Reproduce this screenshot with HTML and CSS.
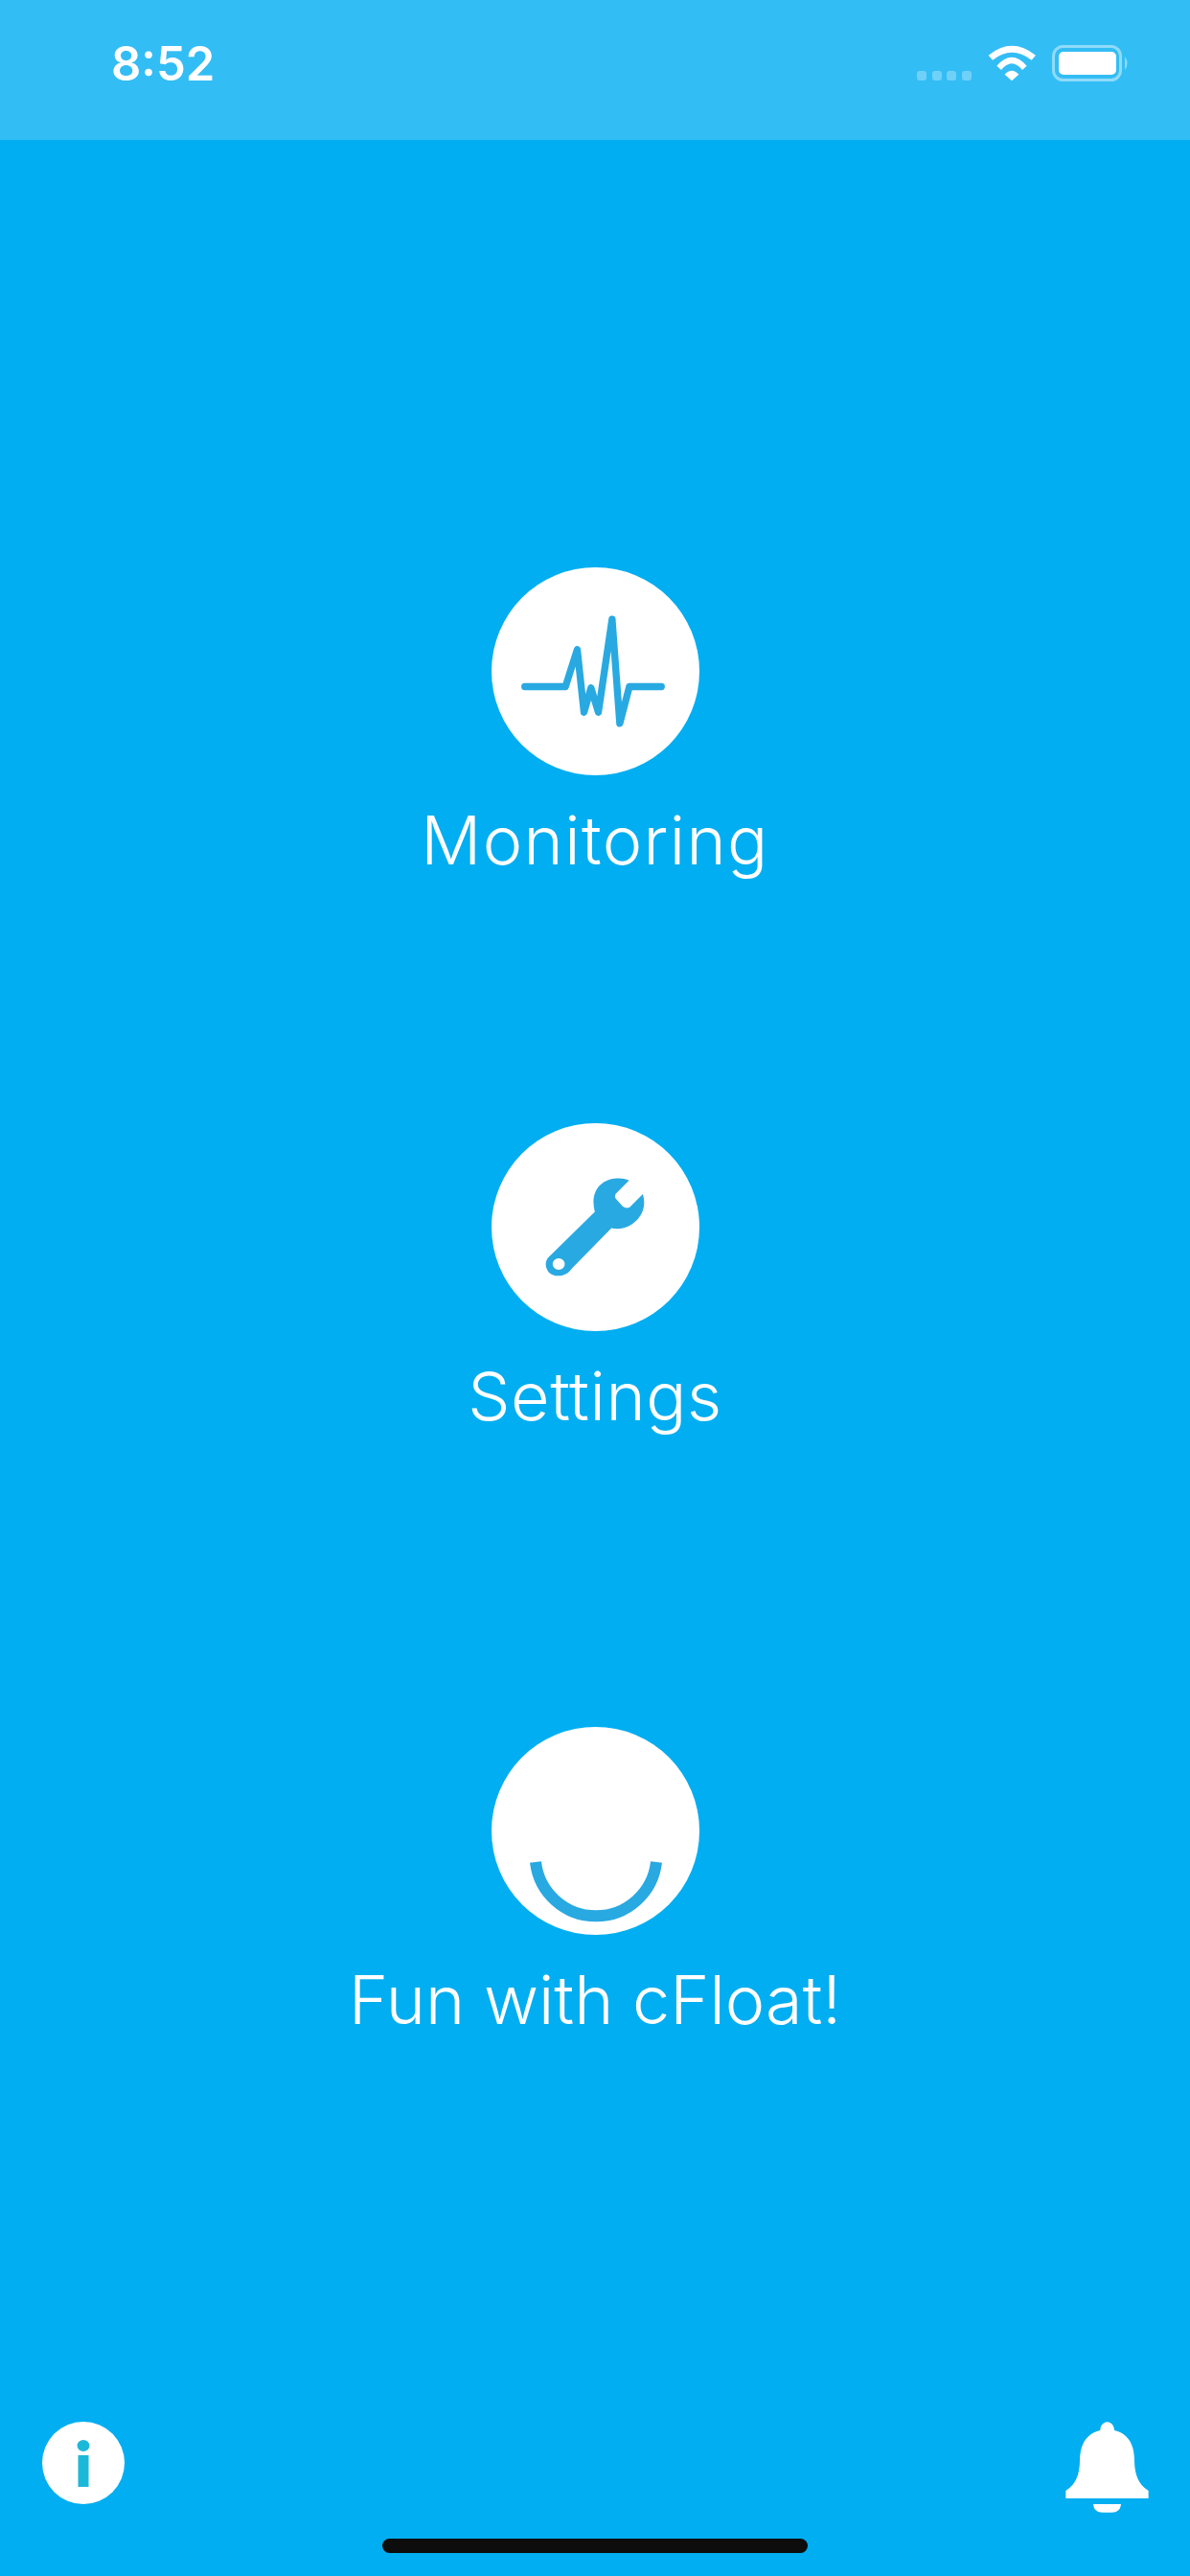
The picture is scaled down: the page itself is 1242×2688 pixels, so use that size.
FILE: index.html
```html
<!DOCTYPE html>
<html lang="en">
<head>
<meta charset="utf-8">
<title>cFloat</title>
<link rel="stylesheet" href="styles.css">
</head>
<body>
<div class="screen">
  <header class="status-bar">
    <span class="time">8:52</span>
    <div class="status-icons">
      <div class="signal"><i></i><i></i><i></i><i></i></div>
      <svg class="wifi" viewBox="300 80 160 115"><path fill="#fff" d="M305 112Q378 52 453 112L440 127Q378 79 318 127ZM331 145Q378 91 425 145L411 158Q378 118 345 158ZM356 172Q378 148 400 172L378 192Z"/></svg>
      <svg class="battery" viewBox="0 0 82 38"><rect x="1.5" y="1.5" width="70" height="35" rx="10" fill="none" stroke="#fff" stroke-opacity=".45" stroke-width="3"/><rect x="7" y="7" width="60" height="24" rx="5" fill="#fff"/><path d="M76 12Q81 19 76 26Z" fill="#fff" fill-opacity=".45"/></svg>
    </div>
  </header>

  <main class="menu">
    <a class="item">
      <div class="disc">
        <svg viewBox="340 65 650 650"><polyline points="444,438 571,438 608,322 629,518 651,442 674,518 717,227 741,553 771,438 871,438" fill="none" stroke="#29a9e1" stroke-width="22" stroke-linecap="round" stroke-linejoin="round"/></svg>
      </div>
      <span class="label label-monitoring">Monitoring</span>
    </a>
    <a class="item item-settings">
      <div class="disc">
        <svg viewBox="220 65 650 650"><path fill-rule="evenodd" fill="#29a9e1" d="M543 342C533 305 540 270 570 250C592 236 625 233 650 244L609 285Q603 293 609 302L630 325Q640 333 652 328L693 287C705 325 690 360 660 380C640 394 615 398 595 393L470 520C455 543 420 550 400 532C385 515 388 495 398 484ZM430 487A19 18 0 1 0 430.100 523A19 18 0 1 0 430 487Z"/></svg>
      </div>
      <span class="label label-settings">Settings</span>
    </a>
    <a class="item item-fun">
      <div class="disc">
        <svg viewBox="513 1802 217 217"><path d="M559 1943A63.400 63.400 0 0 0 685 1943" fill="none" stroke="#29a9e1" stroke-width="12"/></svg>
      </div>
      <span class="label">Fun with cFloat!</span>
    </a>
  </main>

  <footer class="toolbar">
    <svg class="info" viewBox="0 0 86 86"><circle cx="43" cy="43" r="43" fill="#fff"/><ellipse cx="43" cy="25" rx="6.500" ry="6" fill="#1cb8da"/><rect x="37.500" y="35" width="11" height="33" fill="#1cb8da"/></svg>
    <svg class="bell" viewBox="156 112 261 286"><path fill="#fff" d="M265 139C265 124 275 113 287 113C299 113 309 124 309 139C350 148 372 180 372 235C373 275 383 308 416 328V352H157V328C190 308 200 275 201 235C201 180 224 148 265 139Z"/><path fill="#fff" d="M243 370H330C328 388 318 396 300 396H273C255 396 245 388 243 370Z"/></svg>
  </footer>

  <div class="home-area"><div class="home-indicator"></div></div>
</div>
</body>
</html>
```
FILE: styles.css
```css
* { box-sizing: border-box; }
html, body { margin: 0; padding: 0; }
.screen {
  width: 1242px;
  height: 2688px;
  background: #00aef1;
  display: flex;
  flex-direction: column;
  overflow: hidden;
  color: #fff;
}
.status-bar {
  height: 146px;
  flex: none;
  background: #33bdf5;
  display: flex;
  justify-content: space-between;
  align-items: flex-start;
  padding: 37px 62px 0 116px;
}
.time {
  font-family: Inter, "Liberation Sans", sans-serif;
  font-size: 49px;
  font-weight: 600;
  line-height: 60px;
}
.status-icons {
  display: flex;
  align-items: flex-end;
  margin-top: 10px;
  height: 38px;
}
.signal { display: flex; gap: 5.500px; margin-bottom: 1px; margin-right: 16px; }
.signal i { width: 10px; height: 10px; border-radius: 3px; background: rgba(255,255,255,.3); }
.wifi { width: 53.300px; height: 38.300px; margin-right: 15px; }
.battery { width: 82px; height: 38px; }

.menu {
  flex: 1;
  display: flex;
  flex-direction: column;
  align-items: stretch;
  padding-top: 446px;
}
.item { display: flex; flex-direction: column; align-items: center; }
.item-settings { margin-top: 250px; }
.item-fun { margin-top: 300px; }
.disc {
  width: 217px;
  height: 217px;
  margin-left: 1px;
  border-radius: 50%;
  background: #fff;
  overflow: hidden;
}
.disc svg { display: block; width: 217px; height: 217px; }
.label {
  font-family: Inter, "Noto Sans", sans-serif;
  font-weight: 300;
  font-size: 70px;
  line-height: 91px;
  margin-top: 22px;
  white-space: nowrap;
}
.label-monitoring { letter-spacing: 1.400px; }
.label-settings { letter-spacing: .600px; }
.toolbar {
  flex: none;
  height: 122px;
  display: flex;
  justify-content: space-between;
  align-items: flex-start;
  padding: 0 43px 0 44px;
}
.info { width: 86px; height: 86px; display: block; }
.bell { width: 87px; height: 95.300px; display: block; }
.home-area {
  flex: none;
  height: 39px;
  display: flex;
  justify-content: center;
}
.home-indicator {
  width: 444px;
  height: 15px;
  border-radius: 8px;
  background: #0d0d0d;
}
```
